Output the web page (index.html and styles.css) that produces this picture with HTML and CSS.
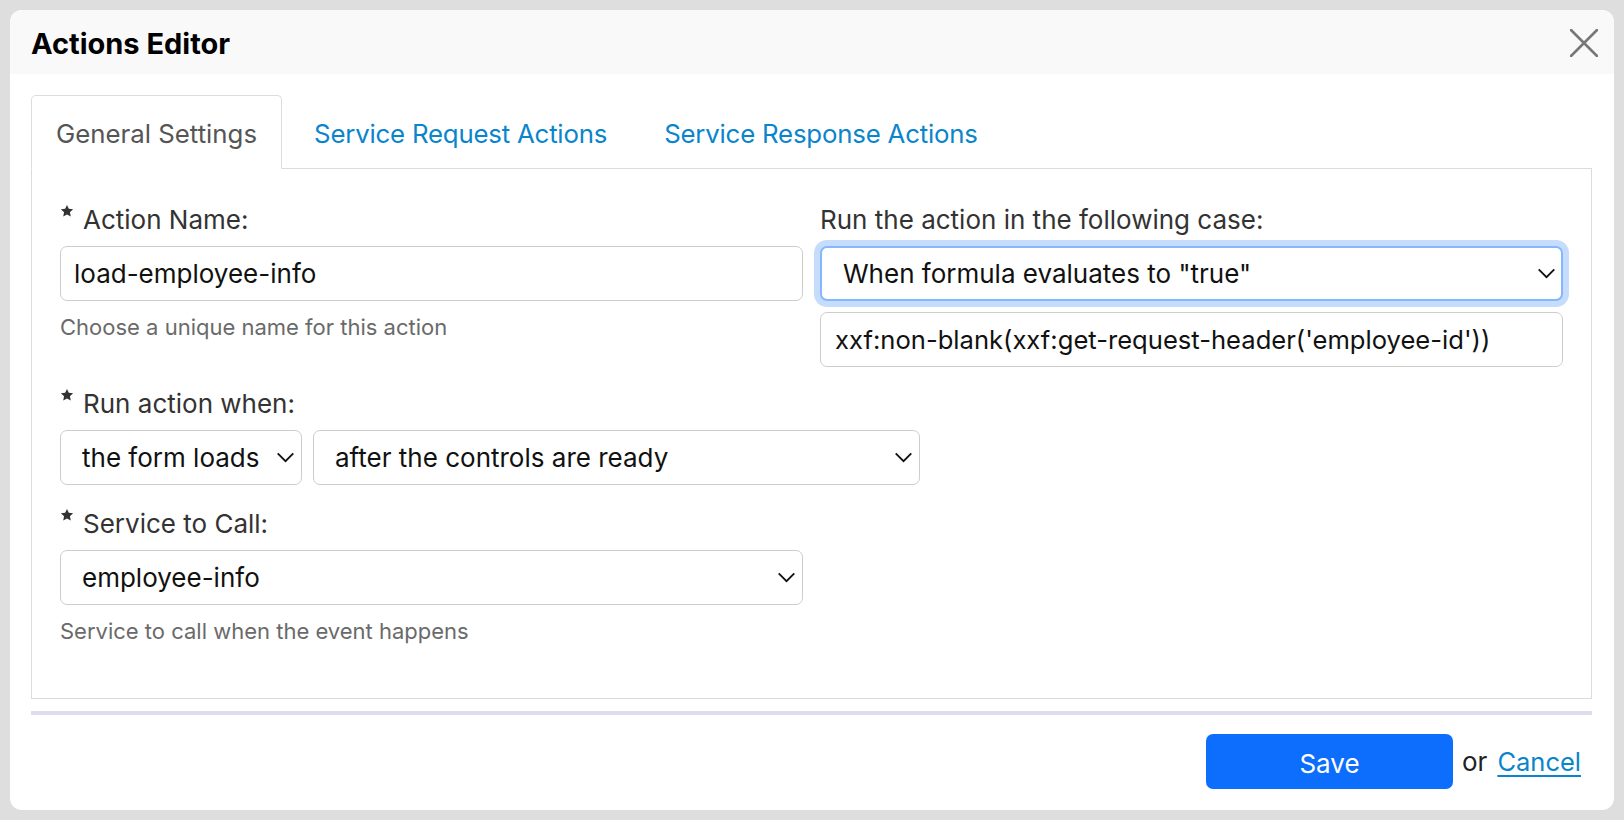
FILE: index.html
```html
<!DOCTYPE html>
<html lang="en">
<head>
<meta charset="utf-8">
<title>Actions Editor</title>
<link rel="stylesheet" href="styles.css">
</head>
<body>
<div class="dialog">
  <div class="dialog-header">
    <h1 class="dialog-title">Actions Editor</h1>
    <button class="close-btn" aria-label="Close">
      <svg width="28" height="28" viewBox="0 0 28 28"><path d="M1 1 L27 27 M27 1 L1 27" stroke="#777" stroke-width="2.6" fill="none" stroke-linecap="round"/></svg>
    </button>
  </div>
  <div class="dialog-body">
    <div class="tabs">
      <div class="tab active">General Settings</div>
      <div class="tab">Service Request Actions</div>
      <div class="tab">Service Response Actions</div>
    </div>
    <div class="panel">
      <div class="row-2col">
        <div class="field">
          <div class="label"><svg class="star" viewBox="0 0 24 24"><path d="M12 1.5 L15.1 8.3 L22.5 9.1 L17 14.1 L18.5 21.5 L12 17.8 L5.5 21.5 L7 14.1 L1.5 9.1 L8.9 8.3 Z" fill="#333"/></svg>Action Name:</div>
          <div class="input">load-employee-info</div>
          <div class="hint">Choose a unique name for this action</div>
        </div>
        <div class="field">
          <div class="label">Run the action in the following case:</div>
          <div class="select focused"><span>When formula evaluates to "true"</span><svg class="chev" viewBox="0 0 20 12"><path d="M1.5 1.5 L10 10 L18.5 1.5" stroke="#111" stroke-width="2" fill="none"/></svg></div>
          <div class="input formula">xxf:non-blank(xxf:get-request-header('employee-id'))</div>
        </div>
      </div>
      <div class="field spaced">
        <div class="label"><svg class="star" viewBox="0 0 24 24"><path d="M12 1.5 L15.1 8.3 L22.5 9.1 L17 14.1 L18.5 21.5 L12 17.8 L5.5 21.5 L7 14.1 L1.5 9.1 L8.9 8.3 Z" fill="#333"/></svg>Run action when:</div>
        <div class="select-row">
          <div class="select w-small"><span>the form loads</span><svg class="chev" viewBox="0 0 20 12"><path d="M1.5 1.5 L10 10 L18.5 1.5" stroke="#111" stroke-width="2" fill="none"/></svg></div>
          <div class="select w-mid"><span>after the controls are ready</span><svg class="chev" viewBox="0 0 20 12"><path d="M1.5 1.5 L10 10 L18.5 1.5" stroke="#111" stroke-width="2" fill="none"/></svg></div>
        </div>
      </div>
      <div class="field spaced half">
        <div class="label"><svg class="star" viewBox="0 0 24 24"><path d="M12 1.5 L15.1 8.3 L22.5 9.1 L17 14.1 L18.5 21.5 L12 17.8 L5.5 21.5 L7 14.1 L1.5 9.1 L8.9 8.3 Z" fill="#333"/></svg>Service to Call:</div>
        <div class="select"><span>employee-info</span><svg class="chev" viewBox="0 0 20 12"><path d="M1.5 1.5 L10 10 L18.5 1.5" stroke="#111" stroke-width="2" fill="none"/></svg></div>
        <div class="hint">Service to call when the event happens</div>
      </div>
    </div>
    <div class="divider"></div>
    <div class="footer">
      <button class="save-btn">Save</button>
      <span class="or">or</span>
      <a class="cancel" href="#">Cancel</a>
    </div>
  </div>
</div>
</body>
</html>
```

FILE: styles.css
```css
* { box-sizing: border-box; }

html, body {
  margin: 0;
  padding: 0;
  background: #dedede;
  font-family: Inter, "Noto Sans", "Liberation Sans", sans-serif;
}

body {
  padding: 10px;
  width: 1624px;
  height: 820px;
}

.dialog {
  width: 1604px;
  height: 800px;
  background: #fff;
  border-radius: 12px;
  overflow: hidden;
  display: flex;
  flex-direction: column;
}

.dialog-header {
  height: 64px;
  background: #f9f9f9;
  display: flex;
  align-items: center;
  justify-content: space-between;
  padding: 0 16px 0 21px;
  flex: none;
}

.dialog-title {
  margin: 3px 0 0 0;
  font-size: 29px;
  font-weight: 700;
  color: #000;
}

.close-btn {
  border: none;
  background: none;
  padding: 0;
  width: 28px;
  height: 28px;
  display: flex;
  margin-top: 2px;
}

.dialog-body {
  padding: 21px 22px 20px 21px;
  display: flex;
  flex-direction: column;
  flex: 1;
}

.tabs {
  display: flex;
  height: 74px;
  border-bottom: 1px solid #dcdcdc;
}

.tab {
  display: flex;
  align-items: center;
  padding: 3px 24px 0 24px;
  margin-right: 7px;
  font-size: 25.8px;
  color: #0a85cc;
  border: 1px solid transparent;
  border-radius: 5px 5px 0 0;
  letter-spacing: -0.2px;
}

.tab.active {
  color: #555;
  border-color: #dcdcdc;
  border-bottom-color: #fff;
  background: #fff;
  margin-bottom: -1px;
  letter-spacing: 0;
}

.panel {
  border: 1px solid #dcdcdc;
  border-top: none;
  padding: 32px 28px 52px 28px;
}

.row-2col {
  display: grid;
  grid-template-columns: 1fr 1fr;
  column-gap: 17px;
}

.field.spaced { margin-top: 18px; }
.field.spaced.half { margin-top: 20px; }
.field.half { width: 743px; }

.label {
  display: flex;
  align-items: center;
  height: 36px;
  font-size: 26px;
  color: #333;
  margin-bottom: 9px;
}

.star {
  width: 14px;
  height: 14px;
  margin-right: 9px;
  align-self: flex-start;
  margin-top: 3px;
}

.input, .select {
  height: 55px;
  border: 1px solid #cdcdcd;
  border-radius: 7px;
  font-size: 26px;
  color: #111;
  display: flex;
  align-items: center;
  background: #fff;
}

.input { padding-left: 13px; }
.input.formula { margin-top: 11px; padding-left: 14px; font-size: 25.6px; }

.select {
  padding-left: 21px;
  padding-right: 6px;
  justify-content: space-between;
}

.select.focused {
  border: 2px solid #86b7fe;
  box-shadow: 0 0 0 6px #c6dcfd;
  padding-left: 21px;
  padding-right: 5px;
}

.chev {
  width: 19px;
  height: 11px;
  flex: none;
}

.select-row {
  display: flex;
  gap: 11px;
}

.w-small { width: 242px; }
.w-mid { width: 607px; }

.hint {
  margin-top: 11px;
  height: 30px;
  line-height: 30px;
  font-size: 22px;
  color: #6a6a6a;
}

.divider {
  margin-top: 12px;
  height: 4px;
  background: #dfdcee;
}

.footer {
  margin-top: 19px;
  display: flex;
  align-items: center;
  justify-content: flex-end;
  padding-right: 11px;
}

.save-btn {
  width: 247px;
  height: 55px;
  border: none;
  border-radius: 7px;
  background: #0d6efd;
  color: #fff;
  font-family: inherit;
  font-size: 26px;
  padding: 4px 0 0 0;
}

.or {
  font-size: 26px;
  color: #222;
  margin: 0 10px 0 9px;
}

.cancel {
  font-size: 25.5px;
  color: #0a85cc;
  text-decoration: underline;
  text-underline-offset: 4px;
  text-decoration-thickness: 2px;
}
```
